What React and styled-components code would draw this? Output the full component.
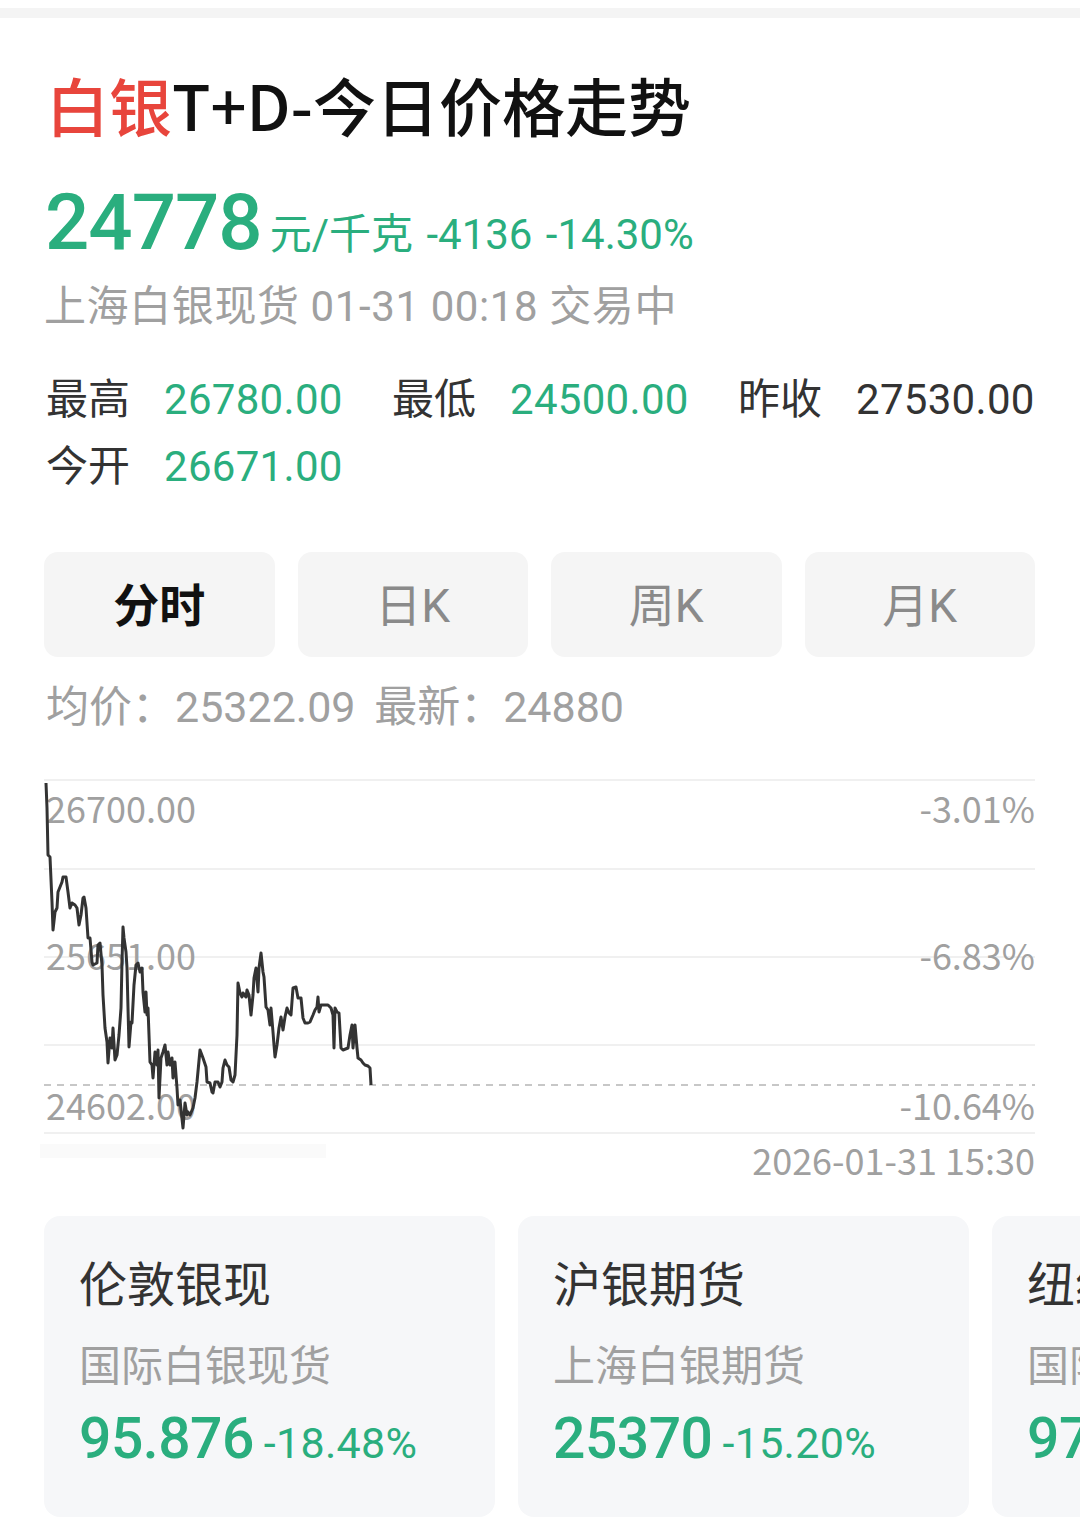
import React from 'react';
import styled, { createGlobalStyle } from 'styled-components';

const GlobalStyle = createGlobalStyle`
  html, body {
    margin: 0;
    padding: 0;
    background: #ffffff;
  }
  body {
    font-family: Roboto, "Noto Sans CJK SC", sans-serif;
    color: #333333;
  }
`;

const GREEN = '#2aae7e';
const GRAY = '#a0a0a0';

const Page = styled.div`
  width: 1080px;
  min-height: 1526px;
  padding-top: 8px;
  overflow: hidden;
  box-sizing: border-box;
`;

const TopBar = styled.div`
  height: 10px;
  background: #f4f4f4;
`;

const Content = styled.div`
  padding: 0 45px 0 44px;
`;

const Title = styled.h1`
  margin: 49px 0 0 2px;
  font-family: "Noto Sans CJK SC", sans-serif;
  font-size: 63px;
  line-height: 74px;
  font-weight: 500;
  color: #111111;
  white-space: nowrap;
`;

const Red = styled.span`
  color: #e8453c;
`;

const PriceRow = styled.div`
  display: flex;
  align-items: baseline;
  margin-top: 37px;
  height: 90px;
  line-height: 90px;
  color: ${GREEN};
  white-space: nowrap;
`;

const BigPrice = styled.span`
  font-family: Roboto, sans-serif;
  font-size: 78px;
  font-weight: 500;
  letter-spacing: -1px;
  margin-right: 8px;
  margin-left: 1px;
`;

const PriceMeta = styled.span`
  font-family: Roboto, "Noto Sans CJK SC", sans-serif;
  font-size: 42px;
  word-spacing: 3px;
`;

const SubLine = styled.div`
  margin-top: 11px;
  font-size: 42px;
  line-height: 56px;
  letter-spacing: 0.6px;
  color: ${GRAY};
  white-space: nowrap;
`;

const StatsGrid = styled.div`
  display: grid;
  grid-template-columns: 346px 346px auto;
  row-gap: 11px;
  margin-top: 37px;
  margin-left: 2px;
`;

const StatItem = styled.div`
  display: flex;
  align-items: baseline;
  font-size: 42px;
  line-height: 56px;
  white-space: nowrap;
`;

const StatLabel = styled.span`
  width: 118px;
  color: #333333;
`;

const StatValue = styled.span`
  color: ${(p) => (p.$tone === 'green' ? GREEN : '#333333')};
  letter-spacing: 0.3px;
`;

const Tabs = styled.div`
  display: grid;
  grid-template-columns: repeat(4, 1fr);
  gap: 23px;
  margin-top: 57px;
`;

const Tab = styled.div`
  height: 105px;
  box-sizing: border-box;
  padding-bottom: 6px;
  border-radius: 14px;
  background: #f5f5f5;
  display: flex;
  align-items: center;
  justify-content: center;
  font-size: 46px;
  font-weight: ${(p) => (p.$active ? 700 : 400)};
  color: ${(p) => (p.$active ? '#111111' : '#8a8a8a')};
`;

const AvgLine = styled.div`
  margin-top: 22px;
  margin-left: 2px;
  font-size: 43px;
  line-height: 56px;
  color: ${GRAY};
  white-space: nowrap;
  word-spacing: 8px;
`;

const ChartSvg = styled.svg`
  display: block;
  margin-top: 35px;
  overflow: visible;
`;

const AxisText = styled.text`
  font-family: "Noto Sans CJK SC", sans-serif;
  font-size: 36px;
  fill: ${GRAY};
`;

const CardsRow = styled.div`
  display: flex;
  gap: 23px;
  margin-top: 26px;
  width: 1200px;
`;

const Card = styled.div`
  flex: 0 0 451px;
  height: 301px;
  box-sizing: border-box;
  padding: 39px 35px 0;
  border-radius: 16px;
  background: #f6f7f9;
  white-space: nowrap;
`;

const CardTitle = styled.div`
  font-size: 48px;
  line-height: 62px;
  color: #333333;
`;

const CardSub = styled.div`
  margin-top: 22px;
  font-size: 42px;
  line-height: 56px;
  color: ${GRAY};
`;

const CardPriceRow = styled.div`
  display: flex;
  align-items: baseline;
  margin-top: 6px;
  line-height: 76px;
  color: ${GREEN};
`;

const CardPrice = styled.span`
  font-family: Roboto, sans-serif;
  font-size: 57px;
  font-weight: 500;
  letter-spacing: -0.5px;
  margin-right: 10px;
`;

const CardPct = styled.span`
  font-family: Roboto, sans-serif;
  font-size: 43px;
  letter-spacing: 0.3px;
`;

// 分时走势, 坐标按页面像素 (x 从 44, y 从 770 起)
const points = [
  [46, 783], [47, 808], [48, 855], [50, 857], [52, 902], [53, 930], [55, 912], [57, 908], [58, 892],
  [62, 882], [63, 877], [66, 877], [68, 892], [70, 908], [72, 903], [75, 905], [77, 908], [79, 925],
  [81, 915], [83, 898], [84, 897], [86, 908], [88, 938], [90, 938], [92, 962], [93, 965], [97, 963],
  [98, 945], [100, 943], [102, 965], [103, 995], [105, 1028], [107, 1042], [108, 1063], [110, 1038],
  [112, 1048], [113, 1028], [115, 1060], [117, 1055], [119, 1035], [121, 1008], [122, 962], [123, 927],
  [124, 938], [126, 952], [127, 968], [128, 1008], [129, 1047], [131, 1022], [132, 1023], [134, 985],
  [136, 965], [138, 963], [140, 972], [142, 968], [143, 992], [145, 1012], [146, 992], [147, 1015],
  [148, 1008], [150, 1062], [152, 1065], [153, 1078], [155, 1052], [157, 1065], [158, 1050], [159, 1098],
  [161, 1058], [163, 1052], [165, 1045], [167, 1065], [168, 1052], [170, 1065], [172, 1058], [173, 1078],
  [175, 1062], [177, 1088], [178, 1105], [180, 1100], [183, 1128], [185, 1103], [187, 1115], [188, 1112],
  [190, 1115], [193, 1108], [195, 1098], [197, 1082], [200, 1050], [203, 1058], [206, 1067], [207, 1082],
  [210, 1083], [212, 1092], [213, 1093], [215, 1082], [218, 1082], [220, 1087], [222, 1082], [223, 1068],
  [225, 1060], [227, 1065], [229, 1067], [231, 1080], [233, 1082], [235, 1075], [237, 1035], [238, 983],
  [240, 993], [242, 997], [243, 993], [246, 997], [247, 990], [249, 995], [251, 1015], [253, 995],
  [254, 978], [256, 968], [258, 992], [259, 968], [261, 953], [263, 972], [264, 977], [266, 1007],
  [268, 1010], [270, 1025], [271, 1008], [273, 1032], [274, 1045], [275, 1057], [277, 1045], [279, 1028],
  [281, 1017], [283, 1030], [285, 1017], [287, 1008], [289, 1013], [291, 1015], [293, 988], [296, 987],
  [298, 998], [301, 998], [303, 1018], [305, 1023], [308, 1023], [310, 1022], [313, 1015], [315, 1010],
  [317, 1007], [318, 997], [319, 1012], [321, 1005], [323, 1005], [328, 1005], [331, 1008], [333, 1015],
  [334, 1048], [335, 1008], [337, 1012], [339, 1013], [341, 1048], [343, 1050], [348, 1048], [350, 1035],
  [352, 1025], [353, 1048], [355, 1025], [357, 1048], [358, 1058], [361, 1060], [363, 1063], [365, 1065],
  [368, 1066], [370, 1068], [371, 1085],
];

const stats = [
  { label: '最高', value: '26780.00', tone: 'green' },
  { label: '最低', value: '24500.00', tone: 'green' },
  { label: '昨收', value: '27530.00', tone: 'dark' },
  { label: '今开', value: '26671.00', tone: 'green' },
];

const tabs = ['分时', '日K', '周K', '月K'];

const markets = [
  { name: '伦敦银现', desc: '国际白银现货', price: '95.876', pct: '-18.48%' },
  { name: '沪银期货', desc: '上海白银期货', price: '25370', pct: '-15.20%' },
  { name: '纽约期银', desc: '国际白银期货', price: '97.530', pct: '-16.32%' },
];

const Chart = () => {
  const W = 991;
  const H = 420;
  const grid = [10, 99, 187, 275, 363];
  const path = points.map(([x, y], i) => `${i ? 'L' : 'M'}${x - 44} ${y - 770}`).join(' ');
  return (
    <ChartSvg width={W} height={H} viewBox={`0 0 ${W} ${H}`}>
      {grid.map((y) => (
        <line key={y} x1="0" x2={W} y1={y} y2={y} stroke="#f0f0f0" strokeWidth="2" />
      ))}
      <line x1="0" x2={W} y1="315" y2="315" stroke="#b5b5b5" strokeWidth="1.5" strokeDasharray="7 6" />
      <rect x="-4" y="374" width="286" height="14" fill="#fafafa" />
      <AxisText x="2" y="53">26700.00</AxisText>
      <AxisText x="2" y="200">25651.00</AxisText>
      <AxisText x="2" y="350">24602.00</AxisText>
      <AxisText x={W} y="53" textAnchor="end">-3.01%</AxisText>
      <AxisText x={W} y="200" textAnchor="end">-6.83%</AxisText>
      <AxisText x={W} y="350" textAnchor="end">-10.64%</AxisText>
      <AxisText x={W} y="405" textAnchor="end">2026-01-31 15:30</AxisText>
      <path d={path} fill="none" stroke="#333333" strokeWidth="3" strokeLinejoin="round" />
    </ChartSvg>
  );
};

const App = () => {
  return (
    <Page>
      <GlobalStyle />
      <TopBar />
      <Content>
        <Title>
          <Red>白银</Red>T+D-今日价格走势
        </Title>

        <PriceRow>
          <BigPrice>24778</BigPrice>
          <PriceMeta>元/千克 -4136 -14.30%</PriceMeta>
        </PriceRow>
        <SubLine>上海白银现货 01-31 00:18 交易中</SubLine>

        <StatsGrid>
          {stats.map((s) => (
            <StatItem key={s.label}>
              <StatLabel>{s.label}</StatLabel>
              <StatValue $tone={s.tone}>{s.value}</StatValue>
            </StatItem>
          ))}
        </StatsGrid>

        <Tabs>
          {tabs.map((t, i) => (
            <Tab key={t} $active={i === 0}>{t}</Tab>
          ))}
        </Tabs>

        <AvgLine>均价：25322.09 最新：24880</AvgLine>

        <Chart />

        <CardsRow>
          {markets.map((m) => (
            <Card key={m.name}>
              <CardTitle>{m.name}</CardTitle>
              <CardSub>{m.desc}</CardSub>
              <CardPriceRow>
                <CardPrice>{m.price}</CardPrice>
                <CardPct>{m.pct}</CardPct>
              </CardPriceRow>
            </Card>
          ))}
        </CardsRow>
      </Content>
    </Page>
  );
};

export default App;
